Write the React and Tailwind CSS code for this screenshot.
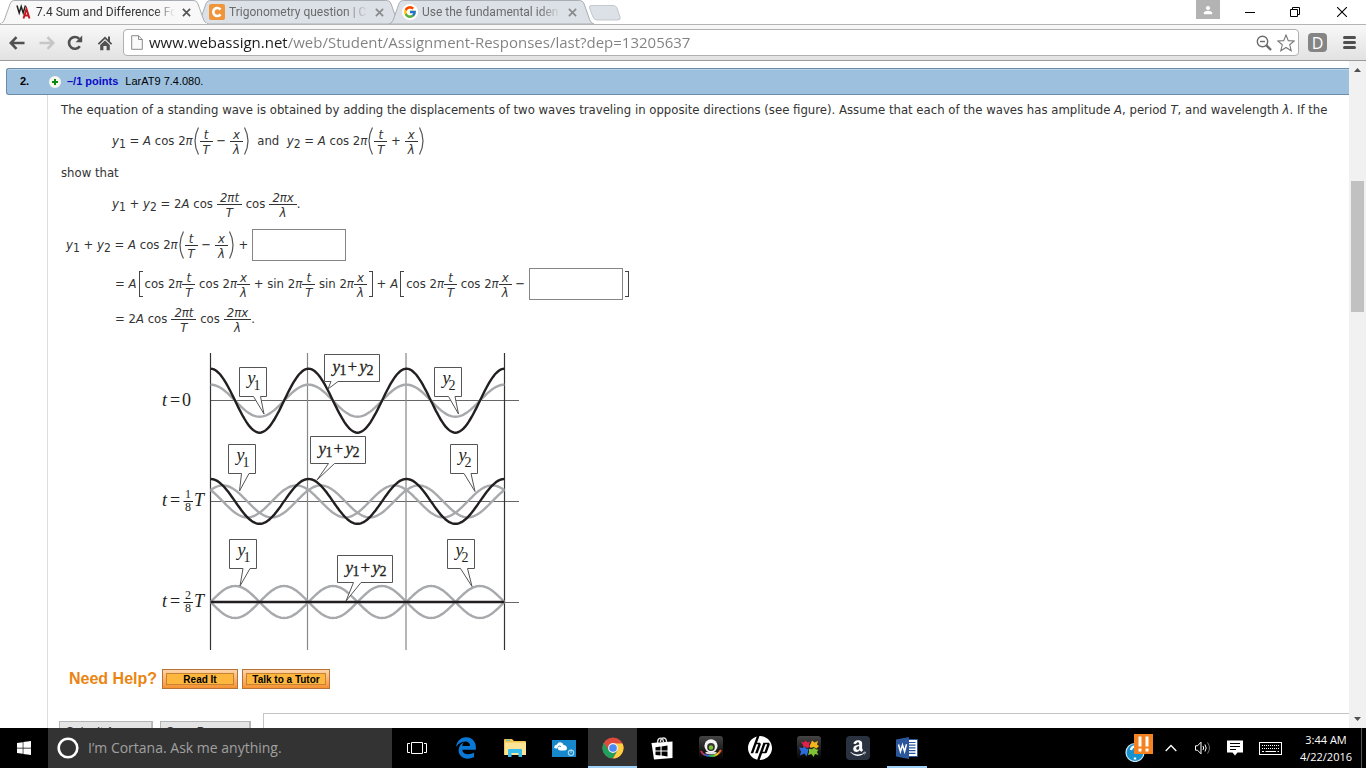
import React from "react";
import { FaAmazon, FaEdgeLegacy, FaWindows } from "react-icons/fa";
import { FcGoogle } from "react-icons/fc";
import { SiHp } from "react-icons/si";

/* ---------- browser chrome ---------- */

function TabShape({ active }) {
  return (
    <svg
      className="absolute inset-0 h-full w-full"
      viewBox="0 0 208 24"
      preserveAspectRatio="none"
      aria-hidden="true"
    >
      <path
        d="M0 24 C3 23 4 21 5 18 L10 4 C11 1 13 0.5 15 0.5 H192 C195 0.5 197 1 198 4 L203 18 C204 21 205 23 208 24 Z"
        fill={active ? "#f8f8f8" : "#dce1e7"}
        stroke="#a9adb2"
      />
      {active && <path d="M1 24 H207" stroke="#f8f8f8" strokeWidth="2" />}
    </svg>
  );
}

function Tab({ icon, title, active }) {
  return (
    <div
      className={
        active
          ? "relative z-10 flex h-6 w-[208px] shrink-0 items-center"
          : "relative -ml-3 flex h-6 w-[205px] shrink-0 items-center"
      }
    >
      <TabShape active={active} />
      <button
        className={
          active
            ? "relative ml-4 flex min-w-0 flex-1 items-center gap-1 text-[#333]"
            : "relative ml-[13px] flex min-w-0 flex-1 items-center gap-1 text-[#6b6b6b]"
        }
      >
        <span className="flex size-4 shrink-0 items-center justify-center">{icon}</span>
        <span className="w-[139px] overflow-hidden text-left font-['Roboto','Open_Sans',sans-serif] text-xs whitespace-nowrap [mask-image:linear-gradient(90deg,#000_85%,transparent)]">
          {title}
        </span>
      </button>
      <button aria-label="Close tab" className="relative mr-[14px] flex size-4 items-center justify-center">
        <svg viewBox="0 0 10 10" className="size-[9px]">
          <path d="M1 1 L9 9 M9 1 L1 9" stroke={active ? "#555" : "#8a8a8a"} strokeWidth="1.9" />
        </svg>
      </button>
    </div>
  );
}

const WebAssignIcon = (
  <svg viewBox="0 0 16 16" className="size-4">
    <path d="M1 1.5 L3.2 9 L5.2 2.5 L7.2 9 L9.4 1.5" fill="none" stroke="#222" strokeWidth="1.5" />
    <path d="M7.5 14.5 L10.5 5 L13.5 14.5 M8.5 11.5 H13" fill="none" stroke="#c4161c" strokeWidth="1.9" />
  </svg>
);

const CheggIcon = (
  <svg viewBox="0 0 16 16" className="size-4">
    <rect width="16" height="16" rx="2" fill="#f0953a" />
    <path d="M11.5 5.6 A4 4 0 1 0 11.5 10.4" fill="none" stroke="#fff" strokeWidth="2.6" />
  </svg>
);

function TabStrip() {
  return (
    <header className="flex h-6 shrink-0 bg-white">
      <Tab active icon={WebAssignIcon} title="7.4 Sum and Difference Fo" />
      <Tab icon={CheggIcon} title="Trigonometry question | C" />
      <Tab
        icon={
          <span className="flex size-4 items-center justify-center rounded-full bg-white">
            <FcGoogle className="size-[14px]" />
          </span>
        }
        title="Use the fundamental iden"
      />
      <button aria-label="New tab" className="-ml-[6px] mt-1 flex h-5">
        <svg viewBox="0 0 34 18" className="h-[18px] w-[34px]">
          <path d="M3 1.5 H25 Q28 1.5 29 4 L32 13 Q33 16 30 16 H9 Q6 16 5 13 L1.5 4 Q1 1.5 3 1.5 Z" fill="#dce1e7" stroke="#c3c8ce" />
        </svg>
      </button>
      <div className="ml-auto flex items-center">
        <button aria-label="Profile" className="mb-1 flex h-[19px] w-6 items-center justify-center self-start bg-[#b3b3b3]">
          <svg viewBox="0 0 10 10" className="size-[10px]">
            <circle cx="5" cy="3" r="2.1" fill="#fff" />
            <path d="M0.8 9.2 V7.6 Q1.5 5.8 5 5.8 Q8.5 5.8 9.2 7.6 V9.2 Z" fill="#fff" />
          </svg>
        </button>
        <button aria-label="Minimize" className="ml-2 flex h-6 w-11 items-center justify-center">
          <svg viewBox="0 0 10 10" className="size-[10px]">
            <path d="M0 5.5 H10" stroke="#000" />
          </svg>
        </button>
        <button aria-label="Restore" className="flex h-6 w-[46px] items-center justify-center">
          <svg viewBox="0 0 10 10" className="size-[10px]">
            <path d="M0.5 2.5 H7.5 V9.5 H0.5 Z M2.5 2.5 V0.5 H9.5 V7.5 H7.5" fill="none" stroke="#000" />
          </svg>
        </button>
        <button aria-label="Close" className="flex h-6 w-12 items-center justify-center">
          <svg viewBox="0 0 10 10" className="size-[10px]">
            <path d="M0 0 L10 10 M10 0 L0 10" stroke="#000" strokeWidth="1.1" />
          </svg>
        </button>
      </div>
    </header>
  );
}

function Toolbar() {
  return (
    <nav className="flex h-[37px] shrink-0 items-center border-t border-b border-t-[#b4b4b4] border-b-[#9a9a9a] bg-gradient-to-b from-[#f8f8f8] to-[#e2e2e2] pl-2">
      <button aria-label="Back" className="flex size-[18px] items-center justify-center">
        <svg viewBox="0 0 16 14" className="h-[14px] w-4">
          <path d="M1.5 7 H15.5 M7.5 1.2 L1.8 7 L7.5 12.8" fill="none" stroke="#505050" strokeWidth="2.6" />
        </svg>
      </button>
      <button aria-label="Forward" className="ml-3 flex size-[18px] items-center justify-center">
        <svg viewBox="0 0 16 14" className="h-[14px] w-4">
          <path d="M0.5 7 H14.5 M8.5 1.2 L14.2 7 L8.5 12.8" fill="none" stroke="#c6c6c6" strokeWidth="2.6" />
        </svg>
      </button>
      <button aria-label="Reload" className="ml-[10px] flex size-[18px] items-center justify-center">
        <svg viewBox="0 0 16 16" className="size-4">
          <path d="M12.8 11.2 A5.9 5.9 0 1 1 12.2 3.8" fill="none" stroke="#505050" strokeWidth="2.6" />
          <path d="M15.2 0.6 V7.2 H8.6 Z" fill="#505050" />
        </svg>
      </button>
      <button aria-label="Home" className="ml-3 flex size-[18px] items-center justify-center">
        <svg viewBox="0 0 16 16" className="size-4">
          <path d="M8 1.5 L0.8 8.6 L2 9.8 L8 4 L14 9.8 L15.2 8.6 L13 6.4 V1.5 H11 V4.4 Z" fill="#505050" />
          <path d="M3.2 10 L8 5.4 L12.8 10 V15.2 H9.6 V11 H6.4 V15.2 H3.2 Z" fill="#505050" />
        </svg>
      </button>
      <div className="ml-[9px] flex h-[27px] min-w-0 flex-1 items-center rounded-sm border border-[#b0b0b0] bg-white pr-[2px] pl-[7px]">
        <svg viewBox="0 0 12 15" className="h-[15px] w-3 shrink-0" aria-hidden="true">
          <path d="M0.7 0.7 H7.5 L11.3 4.5 V14.3 H0.7 Z M7.5 0.7 V4.5 H11.3" fill="#fafafa" stroke="#8a8a8a" />
        </svg>
        <input
          aria-label="Address"
          defaultValue="www.webassign.net/web/Student/Assignment-Responses/last?dep=13205637"
          className="ml-1 min-w-0 flex-1 bg-[linear-gradient(90deg,#1c1c1c_140px,#808080_140px)] bg-clip-text pl-[2px] text-[15px] text-transparent outline-none"
        />
        <button aria-label="Zoom" className="flex size-5 items-center justify-center">
          <svg viewBox="0 0 16 16" className="size-4">
            <circle cx="6.5" cy="6.5" r="5.2" fill="none" stroke="#6b6b6b" strokeWidth="1.4" />
            <path d="M4 6.5 H9" stroke="#6b6b6b" strokeWidth="1.4" />
            <path d="M10.4 10.4 L15 15" stroke="#6b6b6b" strokeWidth="2.4" />
          </svg>
        </button>
        <button aria-label="Bookmark" className="ml-[2px] flex size-5 items-center justify-center">
          <svg viewBox="0 0 18 18" className="size-[18px]">
            <path
              d="M9 1 L11.3 6.6 L17.2 7 L12.7 10.8 L14.2 16.7 L9 13.5 L3.8 16.7 L5.3 10.8 L0.8 7 L6.7 6.6 Z"
              fill="#fff"
              stroke="#777"
              strokeWidth="1.1"
            />
          </svg>
        </button>
      </div>
      <button aria-label="Extension" className="ml-[9px] flex size-[19px] items-center justify-center rounded-sm bg-[#858585] text-base text-white">
        D
      </button>
      <button aria-label="Menu" className="mr-[10px] ml-4 flex w-[13px] flex-col gap-[2px]">
        <span className="h-[3px] w-full rounded-sm bg-[#505050]" />
        <span className="h-[3px] w-full rounded-sm bg-[#505050]" />
        <span className="h-[3px] w-full rounded-sm bg-[#505050]" />
      </button>
    </nav>
  );
}

/* ---------- mathematics ---------- */

function Frac({ top, bottom, wide }) {
  return (
    <span
      className={
        wide
          ? "ml-1 inline-flex flex-col pt-[2px] text-center leading-[13px] italic"
          : "inline-flex w-[13px] flex-col pt-[2px] text-center leading-[13px] italic"
      }
    >
      <span className={wide ? "h-[14px] border-b border-[#333] px-[3px]" : "h-[14px] border-b border-[#333]"}>
        {top}
      </span>
      <span className="h-[14px] pt-px">{bottom}</span>
    </span>
  );
}

function Paren({ right }) {
  return (
    <svg viewBox="0 0 5 28" className="mx-px h-7 w-[5px] shrink-0" role="img" aria-label={right ? ")" : "("}>
      <path d={right ? "M0.5 0.5 Q7.5 14 0.5 27.5" : "M4.5 0.5 Q-2.5 14 4.5 27.5"} fill="none" stroke="#555" strokeWidth="1.2" />
    </svg>
  );
}

function Bracket({ right }) {
  return (
    <span
      className={
        right
          ? "ml-[2px] h-[26px] w-1 shrink-0 border-y border-r border-[#444]"
          : "mx-[2px] h-[26px] w-1 shrink-0 border-y border-l border-[#444]"
      }
    />
  );
}

function Y({ n }) {
  return (
    <span>
      <i>y</i>
      <sub className="text-xs">{n}</sub>
    </span>
  );
}

const tOverT = <Frac top="t" bottom="T" />;
const xOverL = <Frac top="x" bottom="λ" />;

function CosTerm({ fn, frac }) {
  return (
    <>
      <span>
        {fn} 2<i>π</i>
      </span>
      {frac}
    </>
  );
}

function ParenSum({ op }) {
  return (
    <>
      <Paren />
      {tOverT}
      <span>{" " + op + " "}</span>
      {xOverL}
      <Paren right />
    </>
  );
}

function Answer({ label }) {
  return <input aria-label={label} className="h-8 w-[94px] shrink-0 border border-[#858585] bg-white px-1 outline-none" />;
}

/* ---------- figure ---------- */

const LEFT = 210.6;
const RIGHT = 504.4;
const PERIOD = (RIGHT - LEFT) / 3;

function wave(axis, amp, shift) {
  const pts = [];
  for (let i = 0; i <= 180; i += 1) {
    const x = LEFT + ((RIGHT - LEFT) * i) / 180;
    const y = axis - amp * Math.cos((2 * Math.PI * (x - LEFT - shift)) / PERIOD);
    pts.push(x.toFixed(1) + " " + y.toFixed(1));
  }
  return "M" + pts.join(" L");
}

const greyWaves = [
  wave(400.7, 16, 0),
  wave(501.4, 16, PERIOD / 8),
  wave(501.4, 16, -PERIOD / 8),
  wave(602, 16, PERIOD / 4),
  wave(602, 16, -PERIOD / 4),
];
const blackWaves = [wave(400.7, 32, 0), wave(501.4, 22.4, 0), wave(602, 0, 0)];

/* x, y, width, height, tail start, tail end, tip x, tip y, label */
const callouts = [
  [239.5, 367.5, 27, 29, 253.5, 260.5, 264, 414, "1"],
  [324.5, 354.5, 55, 27, 331, 338, 328, 389, "sum"],
  [434.5, 367.5, 27, 29, 448.5, 455, 458.5, 414, "2"],
  [228.5, 444.5, 27, 29, 241.5, 249, 239.5, 491, "1"],
  [310.5, 436.5, 55, 27, 328.5, 334.5, 317, 480, "sum"],
  [450.5, 444.5, 27, 29, 464, 471, 475, 491.5, "2"],
  [229.5, 539.5, 27, 29, 243, 250, 240, 586, "1"],
  [337.5, 555.5, 55, 27, 353.5, 361, 346, 601, "sum"],
  [447.5, 539.5, 27, 29, 460.5, 467.5, 472, 586.5, "2"],
];

function Callout({ c }) {
  const [x, y, w, h, a, b, tx, ty, label] = c;
  const base = y + h;
  return (
    <g>
      <path
        d={`M${x} ${y} H${x + w} V${base} H${b} L${tx} ${ty} L${a} ${base} H${x} Z`}
        fill="#fff"
        stroke="#555"
      />
      {label === "sum" ? (
        <g fontSize="17" stroke="#231f20" strokeWidth="0.3">
          <text x={x + 8} y={y + 17} fontStyle="italic">y</text>
          <text x={x + 15} y={y + 20} fontSize="14">1</text>
          <text x={x + 23} y={y + 17}>+</text>
          <text x={x + 35} y={y + 17} fontStyle="italic">y</text>
          <text x={x + 42} y={y + 20} fontSize="14">2</text>
        </g>
      ) : (
        <>
          <text x={x + 8} y={y + 16} fontStyle="italic">y</text>
          <text x={x + 14} y={y + 22} fontSize="14">{label}</text>
        </>
      )}
    </g>
  );
}

function TimeLabel({ y, num }) {
  return (
    <g>
      <text x="162" y={y + 5} fontStyle="italic">t</text>
      <text x="170" y={y + 5}>=</text>
      {num ? (
        <>
          <text x="188" y={y - 3} fontSize="12" textAnchor="middle">{num}</text>
          <path d={`M183.5 ${y + 0.5} H193`} stroke="#231f20" />
          <text x="188" y={y + 10} fontSize="12" textAnchor="middle">8</text>
          <text x="194" y={y + 5} fontStyle="italic">T</text>
        </>
      ) : (
        <text x="182" y={y + 5}>0</text>
      )}
    </g>
  );
}

function WaveFigure() {
  return (
    <svg
      viewBox="150 345 380 310"
      className="ml-[89px] h-[310px] w-[380px]"
      fontFamily="'Liberation Serif', 'Times New Roman', serif"
      fontSize="18"
      fill="#231f20"
      role="img"
      aria-label="Standing wave at three times"
    >
      <path d="M211 400.5 H519 M211 501.5 H519 M211 602.5 H519" stroke="#666" />
      <path d="M307.5 353 V650 M406 353 V650" stroke="#888" strokeWidth="1.2" />
      <path d="M210.5 353 V650 M504.5 353 V650" stroke="#333" strokeWidth="1.2" />
      {greyWaves.map((d) => (
        <path key={d} d={d} fill="none" stroke="#a7a9ac" strokeWidth="2.4" />
      ))}
      {blackWaves.map((d) => (
        <path key={d} d={d} fill="none" stroke="#231f20" strokeWidth="2.4" />
      ))}
      {callouts.map((c) => (
        <Callout key={c.join()} c={c} />
      ))}
      <TimeLabel y={401} />
      <TimeLabel y={501} num="1" />
      <TimeLabel y={602} num="2" />
    </svg>
  );
}

/* ---------- question ---------- */

const helpButton =
  "flex h-5 items-center justify-center border border-[#b5733a] bg-gradient-to-b from-[#fbd3a8] to-[#f7922d] p-[3px] font-['Liberation_Sans',Arial,sans-serif] text-[10px] font-bold text-black";

function HelpButton({ children, wide }) {
  return (
    <button className={wide ? helpButton + " w-22" : helpButton + " w-19"}>
      <span className="flex h-full w-full items-center justify-center border border-[#c9822f] bg-[#fdb73e]">
        {children}
      </span>
    </button>
  );
}

const eqRow = "flex items-center whitespace-pre";

function Question() {
  return (
    <main className="min-w-0 flex-1 overflow-hidden bg-white pt-[7px] pl-[6px] font-['DejaVu_Sans_Condensed','DejaVu_Sans',Verdana,sans-serif] text-[13px] text-[#333]">
      <div className="flex h-[27px] items-center rounded-l-[3px] border border-r-0 border-[#6b8ba6] bg-[#9dc0de] pl-[13px] font-['Liberation_Sans',Arial,sans-serif] text-[11px] text-black shadow-[inset_0_1px_0_#b6d4ec]">
        <b className="w-[29px]">2.</b>
        <button aria-label="Expand" className="flex size-3 items-center justify-center rounded-full bg-[#f7f7ee]">
          <svg viewBox="0 0 6 6" className="size-[6px]">
            <path d="M3 0 V6 M0 3 H6" stroke="#0a8a0a" strokeWidth="2" />
          </svg>
        </button>
        <a href="#points" className="ml-[6px] font-bold text-[#0b0bc8]">
          –/1 points
        </a>
        <span className="ml-[7px]">LarAT9 7.4.080.</span>
      </div>
      <div className="ml-[41px] border-l border-[#dcdcdc] pl-[13px]">
        <p className="flex h-[29px] items-center whitespace-nowrap">
          <span>
            The equation of a standing wave is obtained by adding the displacements of two waves traveling in opposite
            directions (see figure). Assume that each of the waves has amplitude <i>A</i>, period <i>T</i>, and
            wavelength <i>λ</i>. If the
          </span>
        </p>
        <div className={eqRow + " h-[34px] pl-[51px]"}>
          <Y n="1" />
          <span> = <i>A</i> cos 2<i>π</i></span>
          <ParenSum op="−" />
          <span>  and  </span>
          <Y n="2" />
          <span> = <i>A</i> cos 2<i>π</i></span>
          <ParenSum op="+" />
        </div>
        <p className="flex h-[30px] items-center">show that</p>
        <div className={eqRow + " h-8 pl-[51px]"}>
          <Y n="1" />
          <span> + </span>
          <Y n="2" />
          <span> = 2<i>A</i> cos</span>
          <Frac wide top="2πt" bottom="T" />
          <span> cos</span>
          <Frac wide top="2πx" bottom="λ" />
          <span>.</span>
        </div>
        <div className={eqRow + " mt-[9px] h-8 pl-[5px]"}>
          <Y n="1" />
          <span> + </span>
          <Y n="2" />
          <span> = <i>A</i> cos 2<i>π</i></span>
          <ParenSum op="−" />
          <span className="mr-1"> +</span>
          <Answer label="Second term of the sum" />
        </div>
        <div className={eqRow + " mt-[7px] h-8 pl-[54px]"}>
          <span>= <i>A</i></span>
          <Bracket />
          <CosTerm fn="cos" frac={tOverT} />
          <CosTerm fn=" cos" frac={xOverL} />
          <CosTerm fn=" + sin" frac={tOverT} />
          <CosTerm fn=" sin" frac={xOverL} />
          <Bracket right />
          <span> + <i>A</i></span>
          <Bracket />
          <CosTerm fn="cos" frac={tOverT} />
          <CosTerm fn=" cos" frac={xOverL} />
          <span className="mr-1"> −</span>
          <Answer label="Second product" />
          <Bracket right />
        </div>
        <div className={eqRow + " mt-[3px] h-8 pl-[54px]"}>
          <span>= 2<i>A</i> cos</span>
          <Frac wide top="2πt" bottom="T" />
          <span> cos</span>
          <Frac wide top="2πx" bottom="λ" />
          <span>.</span>
        </div>
        <div className="mt-[10px]">
          <WaveFigure />
        </div>
        <div className="mt-[14px] flex h-5 items-center gap-1 pl-2">
          <span className="mr-px font-['Liberation_Sans',Arial,sans-serif] text-base font-bold text-[#ea8511]">
            Need Help?
          </span>
          <HelpButton>Read It</HelpButton>
          <HelpButton wide>Talk to a Tutor</HelpButton>
        </div>
        <div className="-ml-[2px] mt-6 flex items-start font-['Liberation_Sans',Arial,sans-serif] text-xs">
          <button className="mt-2 h-[22px] w-[94px] border border-[#b5b5b5] bg-[#e4e4e4] shadow-[inset_-1px_0_0_#bbb]">
            Submit Answer
          </button>
          <button className="mt-2 ml-[7px] h-[22px] w-[91px] border border-[#b5b5b5] bg-[#e4e4e4] shadow-[inset_-1px_0_0_#bbb]">
            Save Progress
          </button>
          <div className="ml-3 h-10 flex-1 border-t border-l border-[#c4c4c4]" />
        </div>
      </div>
    </main>
  );
}

function Scrollbar() {
  return (
    <div className="flex w-[17px] shrink-0 flex-col items-center bg-[#f1f1f1]" aria-hidden="true">
      <svg viewBox="0 0 17 17" className="size-[17px] shrink-0">
        <path d="M5 11 L8.5 7 L12 11 Z" fill="#505050" />
      </svg>
      <div className="flex-[103]" />
      <div className="w-[13px] flex-[131] bg-[#c1c1c1]" />
      <div className="flex-[399]" />
      <svg viewBox="0 0 17 17" className="size-[17px] shrink-0">
        <path d="M5 6 L8.5 10 L12 6 Z" fill="#505050" />
      </svg>
    </div>
  );
}

/* ---------- taskbar ---------- */

function TaskButton({ label, children, active, running }) {
  return (
    <button
      aria-label={label}
      className={
        active
          ? "flex w-[49px] flex-col items-center border-b-2 border-[#9fd1f8] bg-[#333]"
          : "flex w-[49px] flex-col items-center"
      }
    >
      <span className="flex h-[38px] items-center justify-center pt-[2px]">{children}</span>
      {running && <span className="h-[2px] w-10 bg-[#9fd1f8]" />}
    </button>
  );
}

function Taskbar() {
  return (
    <footer className="flex h-10 shrink-0 bg-black text-white">
      <button aria-label="Start" className="flex w-12 items-center justify-center">
        <FaWindows className="size-4" />
      </button>
      <label className="flex w-[344px] items-center bg-[#333] pl-[9px]">
        <svg viewBox="0 0 22 22" className="size-[22px] shrink-0" aria-hidden="true">
          <circle cx="11" cy="11" r="9.3" fill="none" stroke="#fff" strokeWidth="2.6" />
        </svg>
        <input
          aria-label="Search"
          placeholder="I’m Cortana. Ask me anything."
          className="ml-[9px] min-w-0 flex-1 bg-transparent text-sm outline-none placeholder:text-[#a0a0a0]"
        />
      </label>
      <TaskButton label="Task view">
        <svg viewBox="0 0 20 12" className="h-3 w-5">
          <path d="M4.5 0.5 H15.5 V11.5 H4.5 Z M3 1.5 H0.5 V10.5 H3 M17 1.5 H19.5 V10.5 H17" fill="none" stroke="#fff" />
        </svg>
      </TaskButton>
      <TaskButton label="Edge">
        <FaEdgeLegacy className="size-[22px] text-[#0a78d7]" />
      </TaskButton>
      <TaskButton label="File Explorer">
        <svg viewBox="0 0 22 18" className="h-[18px] w-[22px]">
          <path d="M0 1 Q0 0 1 0 H8 L10 2 H21 Q22 2 22 3 V16 H0 Z" fill="#f3c64d" />
          <path d="M1 3.5 H22 V16 H1 Z" fill="#fde597" />
          <path d="M2 1.2 H6" stroke="#3fc3e8" />
          <path d="M4 18 V11 Q4 10 5 10 H17 Q18 10 18 11 V18 H14.5 V14 H7.5 V18 Z" fill="#38bdec" />
        </svg>
      </TaskButton>
      <TaskButton label="Cloud">
        <svg viewBox="0 0 24 17" className="h-[17px] w-6">
          <rect width="24" height="17" fill="#1788cc" />
          <path d="M2 7.5 Q2.2 5 5 4.6 Q6 1.8 9 2.4 Q11 2.8 11.5 5 Q14.8 5.4 15 8.2 Q15 10.4 12.5 10.4 H8.5 Q5.5 10.4 6 8 Q3.5 9.3 2 7.5 Z" fill="#fff" />
          <path d="M5.6 7.4 Q7 5 9 6.6" fill="none" stroke="#1788cc" strokeWidth="0.8" />
          <circle cx="19" cy="12.8" r="2.7" fill="none" stroke="#a6d7f1" strokeWidth="1.1" />
          <path d="M19 9.5 V13" stroke="#a6d7f1" />
        </svg>
      </TaskButton>
      <TaskButton label="Chrome" active>
        <svg viewBox="0 0 24 24" className="size-[22px]">
          <circle cx="12" cy="12" r="11.5" fill="#dd4b3e" />
          <path d="M12 23.5 L16.8 14.7 L14 7 H22.4 A11.5 11.5 0 0 1 12 23.5 Z" fill="#ffcd40" />
          <path d="M2 6.3 L7.3 14.8 L12 17.5 L16.8 14.7 L11.5 23.5 A11.5 11.5 0 0 1 2 6.3 Z" fill="#1fa15d" />
          <circle cx="12" cy="12" r="5.4" fill="#f3f3f3" />
          <circle cx="12" cy="12" r="4.2" fill="#4a8af4" />
        </svg>
      </TaskButton>
      <TaskButton label="Store">
        <svg viewBox="0 0 22 24" className="h-6 w-[22px]">
          <path d="M6.5 7 C6.5 1 12 0.5 12.5 6 M9.5 6 C9.5 0.5 15.5 1 15.5 6" fill="none" stroke="#ddd" strokeWidth="1.4" />
          <path d="M0.5 7 L21.5 5.5 V22 L3 23.5 Z" fill="#fff" />
          <path d="M4.5 11.3 L9.5 10.6 V14.5 H4.5 Z M10.6 10.4 L16.5 9.6 V14.5 H10.6 Z M4.5 15.6 H9.5 V19.5 L4.5 18.9 Z M10.6 15.6 H16.5 V20.4 L10.6 19.6 Z" fill="#000" />
        </svg>
      </TaskButton>
      <TaskButton label="Camera">
        <svg viewBox="0 0 24 24" className="size-6">
          <defs>
            <linearGradient id="dark" x1="0" y1="0" x2="0" y2="1">
              <stop offset="0" stopColor="#444" />
              <stop offset="1" stopColor="#000" />
            </linearGradient>
            <linearGradient id="spectrum">
              <stop offset="0" stopColor="#e23" />
              <stop offset="0.3" stopColor="#36d" />
              <stop offset="0.55" stopColor="#2b4" />
              <stop offset="0.8" stopColor="#fc2" />
              <stop offset="1" stopColor="#e42" />
            </linearGradient>
          </defs>
          <rect width="24" height="24" rx="3" fill="url(#dark)" />
          <path d="M2 15 Q4 20 12 20 Q19 20 22 14" fill="none" stroke="url(#spectrum)" strokeWidth="2" />
          <ellipse cx="12" cy="16.8" rx="5.8" ry="1.6" fill="#ddd" />
          <circle cx="12" cy="9.8" r="6.6" fill="#f4f4f4" />
          <circle cx="12" cy="11" r="3.9" fill="#333" />
          <circle cx="12" cy="11.5" r="2.2" fill="#7cc42c" />
        </svg>
      </TaskButton>
      <TaskButton label="HP">
        <SiHp className="size-6 text-white" />
      </TaskButton>
      <TaskButton label="Puzzle">
        <svg viewBox="0 0 24 24" className="size-6">
          <rect width="24" height="24" rx="3" fill="url(#dark)" />
          <g fill="#e0214c">
            <path d="M4 5.5 L7 6.5 L8.5 4.5 L10.5 6.5 L13 5.5 L12 9 L13 11 L10 12 L8.5 10.5 L6.5 11.5 L6 9 Z" />
          </g>
          <g fill="#f3b51a">
            <path d="M14 7 L15 4.5 L17.5 6.5 L21 5 L20 8.5 L22 10 L19.5 12.5 L16.5 11 L13.5 12 L12.8 9.5 Z" />
          </g>
          <g fill="#2c6bdb">
            <path d="M2 11.5 L5.5 12 L8 10.8 L9.5 12.8 L11.5 13 L11 16 L9.5 20.5 L7.5 17.5 L3 19.5 L4 15.5 Z" />
          </g>
          <g fill="#7fc233">
            <path d="M12 12.8 L15 13.2 L17 11.8 L19.5 13.5 L21.5 13.5 L20 16 L21.5 19 L18 18 L16.5 21 L14.5 18 L11 19 L12 16 Z" />
          </g>
        </svg>
      </TaskButton>
      <TaskButton label="Amazon">
        <span className="flex size-6 items-center justify-center rounded-sm bg-[#29323e]">
          <FaAmazon className="size-[18px] text-white" />
        </span>
      </TaskButton>
      <TaskButton label="Word" running>
        <svg viewBox="0 0 24 24" className="size-6">
          <path d="M12 3.5 H22.5 V20.5 H12 Z" fill="#fff" stroke="#2b579a" />
          <path d="M14 6.5 H20.5 M14 9.2 H20.5 M14 11.9 H20.5 M14 14.6 H20.5 M14 17.3 H20.5" stroke="#2b579a" strokeWidth="1.2" />
          <path d="M1 3.5 L14 1 V23 L1 20.5 Z" fill="#2b579a" />
          <path d="M3.5 8.5 L5.4 15.5 L7.5 9 L9.6 15.5 L11.5 8.3" fill="none" stroke="#fff" strokeWidth="1.5" />
        </svg>
      </TaskButton>
      <div className="ml-auto flex items-center">
        <button aria-label="Updates">
          <svg viewBox="0 0 28 28" className="size-7">
            <circle cx="10" cy="18.5" r="9" fill="#1792d0" stroke="#cfe9f6" strokeWidth="1.2" />
            <path d="M6 16 Q7 12 10 13 M10 23.5 V25.5" fill="none" stroke="#fff" strokeWidth="2.4" />
            <rect x="9" width="19" height="20" fill="#f58220" />
            <path d="M15 2.5 V12.5 M22 2.5 V12.5 M15 14.5 V17.5 M22 14.5 V17.5" stroke="#fff" strokeWidth="3" />
          </svg>
        </button>
        <button aria-label="Show hidden icons" className="ml-3">
          <svg viewBox="0 0 12 8" className="h-2 w-3">
            <path d="M0.7 7 L6 1.5 L11.3 7" fill="none" stroke="#fff" strokeWidth="1.3" />
          </svg>
        </button>
        <button aria-label="Volume" className="ml-[18px]">
          <svg viewBox="0 0 16 14" className="h-[14px] w-4">
            <path d="M0.5 4.8 H2.5 L6 1.2 V12.8 L2.5 9.2 H0.5 Z" fill="none" stroke="#fff" />
            <path d="M8 5 Q9.3 7 8 9 M10 3.5 Q12.3 7 10 10.5" fill="none" stroke="#fff" />
            <path d="M12.5 1.5 Q16.5 7 12.5 12.5" fill="none" stroke="#777" />
          </svg>
        </button>
        <button aria-label="Notifications" className="ml-4">
          <svg viewBox="0 0 16 16" className="size-4">
            <path d="M0 0.5 H16 V12.5 H10.5 L8 15.5 L5.5 12.5 H0 Z" fill="#fff" />
            <path d="M3 3.5 H13 M3 6.5 H13 M3 9.5 H9" stroke="#000" />
          </svg>
        </button>
        <button aria-label="Keyboard" className="ml-4">
          <svg viewBox="0 0 23 13" className="h-[13px] w-[23px]">
            <rect x="0.5" y="0.5" width="22" height="12" fill="none" stroke="#fff" />
            <path d="M3 3.5 H20 M3 6.5 H20" stroke="#fff" strokeDasharray="1 1" />
            <path d="M3 9.5 H5 M6.5 9.5 H17 M18.5 9.5 H20" stroke="#fff" />
          </svg>
        </button>
        <button className="ml-[17px] w-[54px] text-center text-[11px] leading-[17px]">
          3:44 AM
          <br />
          4/22/2016
        </button>
        <span className="mr-1 ml-2 h-10 w-px bg-[#555]" />
      </div>
    </footer>
  );
}

export default function App() {
  return (
    <div className="flex h-screen flex-col overflow-hidden bg-white font-['Open_Sans','Noto_Sans',sans-serif]">
      <TabStrip />
      <Toolbar />
      <div className="flex min-h-0 flex-1">
        <Question />
        <Scrollbar />
      </div>
      <Taskbar />
    </div>
  );
}
